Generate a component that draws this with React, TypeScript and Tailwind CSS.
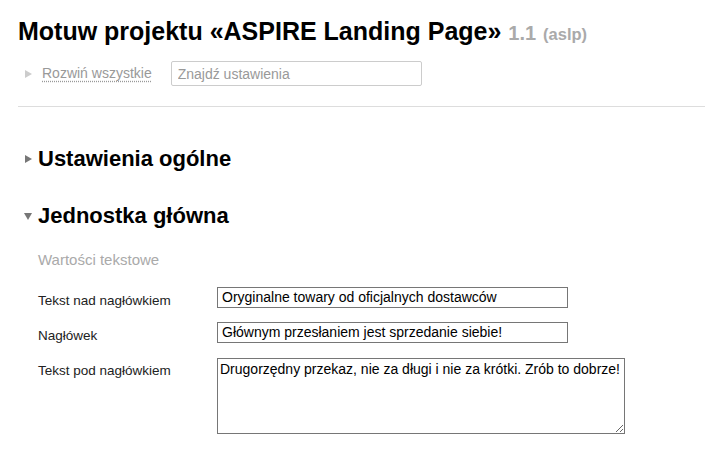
import React from 'react';

const Caret = ({ open = false, className = '' }: { open?: boolean; className?: string }) => (
  <svg width="8" height="8" viewBox="0 0 8 8" className={className}>
    {open ? <polygon points="0,1 8,1 4,8" fill="currentColor" /> : <polygon points="1,0 8,4 1,8" fill="currentColor" />}
  </svg>
);

const Row = ({ label, children }: { label: string; children: React.ReactNode }) => (
  <div className="flex items-start">
    <div className="w-[179px] pt-[7px] text-[13.5px] leading-[14px] text-[#222]">{label}</div>
    {children}
  </div>
);

const App = () => {
  return (
    <div className="min-h-screen w-[705px] bg-white font-['Liberation_Sans',Arial,sans-serif] text-black">
      {/* Header */}
      <div className="pl-[18px] pt-[15px]">
        <h1 className="text-[25px] font-bold leading-[32px]">
          Motuw projektu «ASPIRE Landing Page»{' '}
          <span className="text-[20px] text-[#aaa]">1.1</span>{' '}
          <span className="text-[16.5px] text-[#aaa]">(aslp)</span>
        </h1>
        <div className="mt-[11px] flex items-center">
          <Caret className="ml-[6px] text-[#ccc]" />
          <a className="ml-[10px] text-[14px] text-[#999] underline decoration-dotted underline-offset-[3px]">
            Rozwiń wszystkie
          </a>
          <input
            placeholder="Znajdź ustawienia"
            className="ml-[19px] h-[25px] w-[251px] rounded-[2px] border border-[#ccc] px-[6px] text-[14px] placeholder:text-[#999] outline-none"
          />
        </div>
      </div>

      <div className="ml-[18px] mt-[20px] border-t border-[#ddd]" />

      {/* Sections */}
      <div className="pl-[24px]">
        <div className="mt-[38px] flex items-center">
          <Caret className="text-[#777]" />
          <h2 className="ml-[6px] text-[22px] font-bold leading-[28px]">Ustawienia ogólne</h2>
        </div>
        <div className="mt-[29px] flex items-center">
          <Caret open className="text-[#777]" />
          <h2 className="ml-[6px] text-[22px] font-bold leading-[28px]">Jednostka główna</h2>
        </div>
      </div>

      <div className="pl-[38px]">
        <div className="mt-[19px] text-[15px] text-[#aaa]">Wartości tekstowe</div>
        <div className="mt-[15px] flex flex-col gap-[14px]">
          <Row label="Tekst nad nagłówkiem">
            <input
              defaultValue="Oryginalne towary od oficjalnych dostawców"
              className="h-[21px] w-[351px] border border-[#767676] px-[4px] text-[14px] text-black outline-none"
            />
          </Row>
          <Row label="Nagłówek">
            <input
              defaultValue="Głównym przesłaniem jest sprzedanie siebie!"
              className="h-[21px] w-[351px] border border-[#767676] px-[4px] text-[14px] text-black outline-none"
            />
          </Row>
          <Row label="Tekst pod nagłówkiem">
            <textarea
              defaultValue="Drugorzędny przekaz, nie za długi i nie za krótki. Zrób to dobrze!"
              className="mt-[1px] h-[76px] w-[408px] border border-[#767676] px-[2px] py-[2px] text-[14px] leading-[17px] text-black outline-none"
            />
          </Row>
        </div>
      </div>
    </div>
  );
};

export default App;
